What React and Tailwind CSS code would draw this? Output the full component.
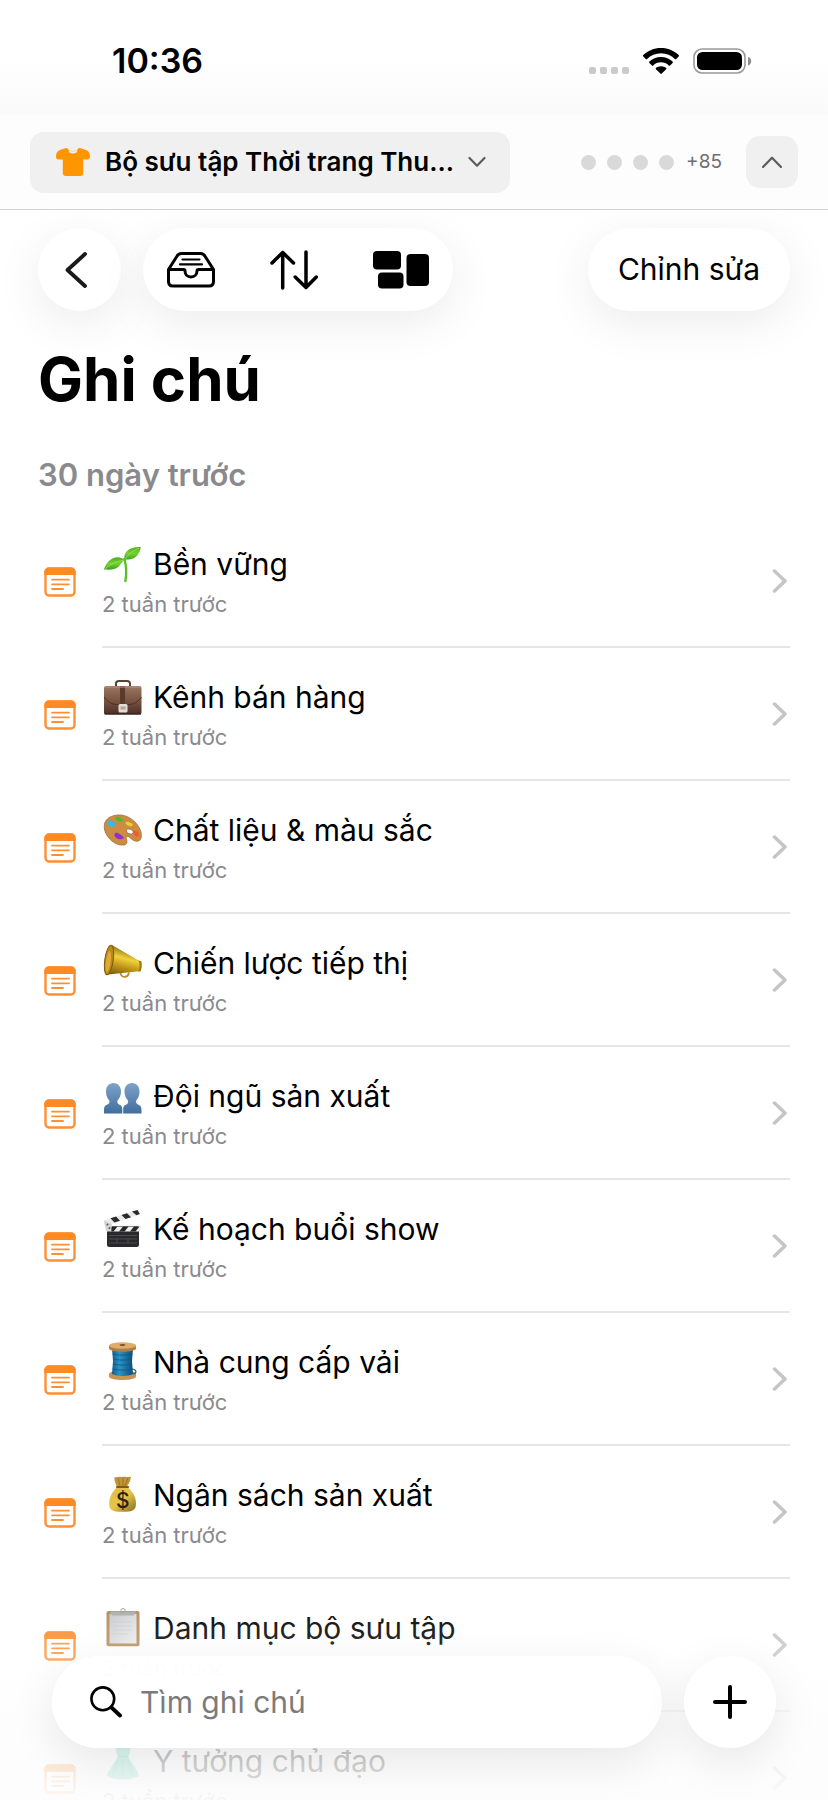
import { useState } from "react";

const notes = [
  { id: 1, icon: Seedling, title: "Bền vững", age: "2 tuần trước" },
  { id: 2, icon: Briefcase, title: "Kênh bán hàng", age: "2 tuần trước" },
  { id: 3, icon: Palette, title: "Chất liệu & màu sắc", age: "2 tuần trước" },
  { id: 4, icon: Megaphone, title: "Chiến lược tiếp thị", age: "2 tuần trước" },
  { id: 5, icon: People, title: "Đội ngũ sản xuất", age: "2 tuần trước" },
  { id: 6, icon: Clapper, title: "Kế hoạch buổi show", age: "2 tuần trước" },
  { id: 7, icon: Spool, title: "Nhà cung cấp vải", age: "2 tuần trước" },
  { id: 8, icon: MoneyBag, title: "Ngân sách sản xuất", age: "2 tuần trước" },
  { id: 9, icon: Clipboard, title: "Danh mục bộ sưu tập", age: "2 tuần trước" },
  { id: 10, icon: Dress, title: "Ý tưởng chủ đạo", age: "2 tuần trước" },
];

function Emoji({ children }) {
  return (
    <svg viewBox="0 0 40 40" className="h-10 w-10 shrink-0" aria-hidden="true">
      {children}
    </svg>
  );
}

function Seedling() {
  return (
    <Emoji>
      <defs>
        <linearGradient id="leaf" x1="0" y1="0" x2="0" y2="1">
          <stop offset="0" stopColor="#4fae1f" />
          <stop offset="0.5" stopColor="#74d233" />
          <stop offset="1" stopColor="#3f9d1b" />
        </linearGradient>
      </defs>
      <path d="M22.5 15c1.8 7 2.4 14 .9 22" fill="none" stroke="#5cbf24" strokeWidth="2.4" strokeLinecap="round" />
      <path d="M23 16c-2-5 1-9.500 6-11.500 3-1.200 7-1.500 9.800-1.500-1 6-4 10.500-8.500 11.800-2.500.8-5 .6-7.300 1.200z" fill="url(#leaf)" />
      <path d="M22.500 16c-3-3-8-3.600-12.500-1.200C5.500 17 4 21 1.800 25.500c6 .3 11.500.6 15-3 2-2.200 3-4.500 5.700-6.500z" fill="url(#leaf)" />
      <path d="M23 15.500C27 9 32 6.500 37 4M21.500 16.500C15 17 8 20 3 25" fill="none" stroke="#a0e65a" strokeWidth=".8" />
    </Emoji>
  );
}

function Briefcase() {
  return (
    <Emoji>
      <defs>
        <linearGradient id="case" x1="0" y1="0" x2="0" y2="1">
          <stop offset="0" stopColor="#9a775f" />
          <stop offset="0.5" stopColor="#7a5543" />
          <stop offset="1" stopColor="#4a2e25" />
        </linearGradient>
      </defs>
      <path d="M14 9V6.500C14 4.500 15 4 17 4h8c2 0 3 .5 3 2.500V9" fill="none" stroke="#5d4032" strokeWidth="2" />
      <rect x="2" y="9" width="37.500" height="28.500" rx="2" fill="url(#case)" />
      <path d="M2 20c5 7 10 8 18.700 8S34.500 27 39.500 20" fill="none" stroke="#4b3026" strokeWidth="1" />
      <path d="M18 9h5v20h-5z" fill="#5a3a2d" />
      <rect x="16.500" y="27" width="9" height="8.500" rx="1.500" fill="#e3ddd3" />
      <path d="M18.500 29.500h5v3h-5z" fill="#b0a393" />
      <path d="M3 10h35.500" stroke="#b8967c" strokeWidth="1" />
      <path d="M2.500 36.800h36.500" stroke="#38211a" strokeWidth="1.200" />
    </Emoji>
  );
}

function Palette() {
  return (
    <Emoji>
      <defs>
        <linearGradient id="wood" x1="0" y1="0" x2="1" y2="1">
          <stop offset="0" stopColor="#c98e48" />
          <stop offset="1" stopColor="#cf8a3b" />
        </linearGradient>
      </defs>
      <path
        d="M16 5c9-.7 19 6 22.500 15.500 1.200 3.500 1.500 8-1 10-3 2-7.500-.5-9.800-3-1.700-1.800-4.400-1-3.400 1.400 1 2.500 1.200 5.600-2.300 6.100-7 .8-14-4-17.500-10.500C.5 17.500.5 6.300 16 5z"
        fill="url(#wood)"
        stroke="#a46f2e"
        strokeWidth=".8"
      />
      <ellipse cx="27.800" cy="21.500" rx="3.600" ry="2.400" fill="#fff" stroke="#8e5c25" strokeWidth=".7" transform="rotate(20 27.800 21.500)" />
      <path d="M6 11c3-1.500 4 .5 6 1.300 3 1.200 2.500 4-.5 4.400C8 17 5 15.500 5.200 13z" fill="#3fb6e8" />
      <path d="M14 7c3-1 4 .8 6 1.700 2 1 1 3-1.200 3-3.500-.1-6.500-3-4.800-4.700z" fill="#46bd2c" />
      <path d="M24 12c2-1 4 .5 5.600 1.600 2.400 1.700.4 3.200-1.800 2.600-2.600-.7-5.300-2.900-3.800-4.200z" fill="#f2cf2c" />
      <path d="M32 20.500c2-.5 4.500 1.800 5 4 .3 2-1.700 2.700-3.500 1.400-2-1.500-3.500-4.900-1.500-5.400z" fill="#ef5a3d" />
      <path d="M12.500 24c1.500-2.500 4-1 6 .5 2.400 1.600 4.500 4 1.500 4.700-3.500.8-8.500-2-7.500-5.200z" fill="#9130cf" />
    </Emoji>
  );
}

function Megaphone() {
  return (
    <Emoji>
      <defs>
        <linearGradient id="horn" x1="0.300" y1="0" x2="0" y2="1">
          <stop offset="0" stopColor="#8a6a10" />
          <stop offset="0.350" stopColor="#f0d23c" />
          <stop offset="0.600" stopColor="#c39a1a" />
          <stop offset="1" stopColor="#6f5208" />
        </linearGradient>
      </defs>
      <path d="M18.500 29c-.5 6 7.500 6.600 8.500.5" fill="none" stroke="#b98f20" strokeWidth="1.800" />
      <path d="M10 2l27.500 16c2 2.500 1.600 7.500-.8 10.200L4 31.800z" fill="url(#horn)" />
      <path d="M36.500 17.600l2.800.6c.9 3.300.6 7-.6 10l-2.700.6c1.800-3.500 2-7.500.5-11.200z" fill="#a07c14" />
      <ellipse cx="7" cy="17" rx="4.200" ry="15" transform="rotate(8 7 17)" fill="#b98a14" stroke="#7c5c0c" strokeWidth="1" />
      <ellipse cx="6.300" cy="18.500" rx="2.400" ry="10.500" transform="rotate(8 6.300 18.500)" fill="#dfa93c" />
    </Emoji>
  );
}

function People() {
  const figure =
    "M11.500 7c4.500 0 7.500 3.500 7.500 8.500 0 4-1.500 7-3.500 9-.6 2 .3 3.500 2 4.200 2 .7 2.800 1.800 2.800 4.300v4.500H2V34c0-3 .8-4.500 3-5.300 2-.7 3-2.200 2.300-4.200-2-2-3.300-5-3.300-9C4 10.500 7 7 11.500 7z";
  return (
    <Emoji>
      <defs>
        <linearGradient id="silhouette" x1="0" y1="0" x2="0" y2="1">
          <stop offset="0" stopColor="#7fa3c8" />
          <stop offset="1" stopColor="#416e9c" />
        </linearGradient>
      </defs>
      <path d={figure} fill="url(#silhouette)" />
      <path d={figure} fill="url(#silhouette)" transform="translate(41.500 0) scale(-1 1)" />
    </Emoji>
  );
}

function Clapper() {
  return (
    <Emoji>
      <rect x="5" y="17" width="32" height="21" rx="2.500" fill="#29292b" />
      <path d="M5 17.500h34.500L38 22.500H5z" fill="#eee" />
      <path d="M10 17.500h5.500l-4 5H6zM21 17.500h5.500l-4 5H17zM32 17.500h5.500l-4 5H28z" fill="#252525" />
      <path d="M1.800 11.500L36.500.6l1.500 4.600L4 16.800z" fill="#e9e9e9" />
      <path d="M8.500 9.300l5.500-1.700 4 4.200-5.500 1.800zM19.500 5.900l5.500-1.700 4 4-5.500 1.900zM30 2.600L35.500.9l2.300 4-3.300 1.400z" fill="#2a2a2a" />
      <path d="M1.800 11.500l8 3.500-.5 7.500L4 22z" fill="#d4d4d4" />
      <circle cx="5.500" cy="15.500" r="1" fill="#555" />
      <circle cx="7.500" cy="19" r="1" fill="#555" />
      <path d="M7 26.500h28M7 30h28M7 34h28M15 30v4M26 30v4" stroke="#5c5c60" strokeWidth=".7" />
    </Emoji>
  );
}

function Spool() {
  return (
    <Emoji>
      <defs>
        <linearGradient id="thread" x1="0" y1="0" x2="1" y2="0">
          <stop offset="0" stopColor="#0e5f8e" />
          <stop offset="0.350" stopColor="#2a93c8" />
          <stop offset="1" stopColor="#0b4e78" />
        </linearGradient>
      </defs>
      <path d="M7 32c0-2 6-3.500 13.500-3.500S34 30 34 32v2.500c0 2-6 3.500-13.500 3.500S7 36.500 7 34.500z" fill="#cc9454" />
      <path d="M10 6h21l-1 13 1 13c-4 2.500-17 2.500-21 0l1-13z" fill="url(#thread)" />
      <path d="M10.500 12c6 1.500 14 1.500 20 0M11 17c6 1.500 13 1.500 19 0M11 22c6 1.500 13 1.500 19 0M10.500 27c6 1.500 14 1.500 20 0" fill="none" stroke="#0b5683" strokeWidth=".8" />
      <path d="M29 27c4 0 6 2 4.500 4-1.500 1.500-5 .5-8-.5" fill="none" stroke="#145f8c" strokeWidth="1.200" />
      <path d="M7 3.500v3c0 1.800 6 3.200 13.500 3.200S34 8.300 34 6.500v-3z" fill="#b57d41" />
      <ellipse cx="20.500" cy="3.500" rx="13.500" ry="3.200" fill="#deac6d" />
      <ellipse cx="20.500" cy="3" rx="3" ry=".9" fill="#7c5129" />
    </Emoji>
  );
}

function MoneyBag() {
  return (
    <Emoji>
      <defs>
        <linearGradient id="bag" x1="0" y1="0" x2="1" y2="1">
          <stop offset="0" stopColor="#dfbb45" />
          <stop offset="0.500" stopColor="#e7c548" />
          <stop offset="1" stopColor="#8b681a" />
        </linearGradient>
      </defs>
      <path d="M15.500 12C13 8.500 12 5 12.500 2c3 .8 4-1 7 .1 2.500-1 5 .7 9.500-.6-.5 4-2 7.500-4.500 10.500z" fill="#c19735" />
      <path d="M16 3l2 8M21 3v8M26 3l-3 8" stroke="#8f6b1e" strokeWidth=".8" />
      <path d="M15 12.500h11c4.500 4 8 9.500 8 16 0 6.500-3 8.300-13.500 8.300S7.200 35 7.200 28.500c0-6.500 3.300-12 7.800-16z" fill="url(#bag)" />
      <path d="M15 12h11" stroke="#855828" strokeWidth="2.200" strokeLinecap="round" />
      <text x="20.800" y="32.500" textAnchor="middle" fontFamily="Inter, sans-serif" fontSize="21" fontWeight="500" fill="#2b2213">
        $
      </text>
    </Emoji>
  );
}

function Clipboard() {
  return (
    <Emoji>
      <defs>
        <linearGradient id="sheet" x1="0" y1="0" x2="1" y2="1">
          <stop offset="0" stopColor="#c5c8cb" />
          <stop offset="1" stopColor="#ececec" />
        </linearGradient>
      </defs>
      <rect x="4.500" y="3" width="33" height="35.300" rx="2" fill="#b58b5a" />
      <path d="M7.500 6h27v29.500h-27z" fill="url(#sheet)" />
      <path d="M11 14h19M11 18h19M11 22h19M11 26h15" stroke="#bfc2c6" strokeWidth=".5" />
      <path d="M8 3.500h26l-2 4H10z" fill="#a9adb0" />
      <circle cx="21" cy="2.700" r="2.200" fill="none" stroke="#a0a0a0" strokeWidth="1" />
    </Emoji>
  );
}

function Dress() {
  return (
    <Emoji>
      <path d="M13 1c2 3 4 4 8 4s6-1 8-4l-1 10-2 5c4 6 8 12 11 18-3 3.500-9 4.500-16 4.500S8 37.500 4.500 34C8 28 12 22 16 16l-2-5z" fill="#4fd2b2" />
      <path d="M15.500 15.500h11M16 19l-6 17M21 19v19M26 19l5 17" stroke="#35b594" strokeWidth="1" fill="none" />
    </Emoji>
  );
}

function NoteIcon() {
  return (
    <svg viewBox="0 0 32 30" className="h-[30px] w-8 shrink-0" aria-hidden="true">
      <rect x="1.500" y="1.500" width="29" height="27" rx="3.500" fill="#fff" stroke="#ff8f33" strokeWidth="2.400" />
      <path d="M.3 8V5A4.500 4.500 0 0 1 4.800.5h22.400A4.500 4.500 0 0 1 31.700 5v3z" fill="#ff8a24" />
      <path d="M8 12.700h17M8 17.300h17M8 22h11" stroke="#ff8f33" strokeWidth="1.800" strokeLinecap="round" />
    </svg>
  );
}

function StatusBar() {
  return (
    <div className="flex h-[115px] shrink-0 items-center justify-between bg-linear-to-b from-white from-50% to-[#fafafa] pt-1.5 pr-[75px] pl-28">
      <span className="text-[34px] leading-10 font-semibold">10:36</span>
      <div className="flex items-center gap-3.5">
        <div className="flex gap-1 pt-5">
          {[0, 1, 2, 3].map((dot) => (
            <span key={dot} className="h-[7px] w-[7px] rounded-xs bg-[#cacaca]" />
          ))}
        </div>
        <svg viewBox="0 0 36 26" className="h-[26px] w-9" aria-label="Wi-Fi">
          <path d="M18 0c7 0 13.300 2.700 17.700 7.100.4.400.4.900 0 1.300l-2.500 2.500c-.4.400-.9.400-1.300 0C28.300 7.400 23.400 5.300 18 5.300S7.700 7.400 4.100 10.900c-.4.400-.9.400-1.300 0L.3 8.400c-.4-.4-.4-.9 0-1.300C4.700 2.700 11 0 18 0z" />
          <path d="M18 9c4.600 0 8.700 1.800 11.600 4.600.4.400.4.900 0 1.300l-2.500 2.500c-.4.400-.9.400-1.300 0-2-1.900-4.800-3.100-7.800-3.100s-5.800 1.200-7.800 3.100c-.4.400-.9.400-1.300 0l-2.500-2.500c-.4-.4-.4-.9 0-1.300C9.300 10.800 13.400 9 18 9z" />
          <path d="M18 18.300c2 0 3.900.7 5.200 1.800.4.400.4.800 0 1.200l-4.500 4.300c-.4.400-.9.400-1.300 0l-4.500-4.300c-.4-.4-.4-.8 0-1.200 1.300-1.100 3.100-1.800 5.100-1.800z" />
        </svg>
        <svg viewBox="0 0 60 26" className="h-[26px] w-[60px]" aria-label="Pin">
          <rect x="1" y="1" width="51" height="24" rx="8" fill="none" stroke="#999" strokeWidth="1.600" />
          <rect x="4" y="4" width="45" height="18" rx="5.500" />
          <path d="M55 9c2 .3 3.200 2 3.200 4.200S57 17.200 55 17.500z" fill="#8e8e8e" />
        </svg>
      </div>
    </div>
  );
}

function WorkspaceBar() {
  const [collapsed, setCollapsed] = useState(false);

  return (
    <header className="flex h-[95px] shrink-0 items-center justify-between border-b border-[#d2d2d2] bg-[#fdfdfd] px-[30px]">
      <button type="button" className="flex h-[61px] items-center rounded-[14px] bg-[#f0f0f0] pr-6 pl-[26px]">
        <svg viewBox="0 0 34 28" className="h-7 w-[34px]" aria-hidden="true">
          <path
            d="M11 0C9 .2 5 1.300 2.500 2.700 1 3.600 0 6 0 8.500c0 2 .8 3 2.500 3H6.800V25c0 2 1 3 3 3h14.400c2 0 3-1 3-3V11.500h4.300c1.700 0 2.500-1 2.500-3 0-2.500-1-4.900-2.500-5.800C29 1.300 25 .2 23 0c-.8 0-1.500 1.500-2.300 2.600-1 .6-6.400.6-7.400 0z"
            fill="#ff9500"
          />
          <path d="M12.500 2.500c0 4 9 4 9 0-2 1-7 1-9 0z" fill="#f0f0f0" />
        </svg>
        <span className="ml-[15px] text-[26px] leading-8 font-semibold">Bộ sưu tập Thời trang Thu...</span>
        <svg viewBox="0 0 18 12" className="ml-3.5 h-3 w-[18px]" aria-hidden="true">
          <path d="M1.500 2L9 9.700 16.500 2" fill="none" stroke="#5c5c5c" strokeWidth="2.200" strokeLinecap="round" strokeLinejoin="round" />
        </svg>
      </button>
      <div className="flex items-center">
        <div className="flex gap-[11px]">
          {[0, 1, 2, 3].map((dot) => (
            <span key={dot} className="h-[15px] w-[15px] rounded-full bg-[#d9d9d9]" />
          ))}
        </div>
        <span className="ml-3 text-[19px] leading-7 text-[#6e6e6e]">+85</span>
        <button
          type="button"
          aria-label="Thu gọn"
          aria-expanded={!collapsed}
          onClick={() => setCollapsed(!collapsed)}
          className="ml-6 flex h-[52px] w-[52px] items-center justify-center rounded-[14px] bg-[#f0f0f0]"
        >
          <svg viewBox="0 0 20 12" className="h-3 w-5" aria-hidden="true">
            <path d="M1 11l9-9.300L19 11" fill="none" stroke="#5c5c5c" strokeWidth="2.200" strokeLinecap="round" strokeLinejoin="round" />
          </svg>
        </button>
      </div>
    </header>
  );
}

function Toolbar() {
  return (
    <nav className="flex items-center pt-[18px]">
      <button
        type="button"
        aria-label="Quay lại"
        className="flex h-[83px] w-[83px] items-center justify-center rounded-full bg-white shadow-[0_12px_48px_rgba(0,0,0,0.08)]"
      >
        <svg viewBox="0 0 22 36" className="mr-2 h-9 w-[22px]" aria-hidden="true">
          <path d="M20 2L2.500 18 20 34" fill="none" stroke="#1a1a1c" strokeWidth="3.800" strokeLinecap="round" strokeLinejoin="round" />
        </svg>
      </button>
      <div className="ml-[22px] flex h-[83px] items-center gap-[55px] rounded-full bg-white px-6 shadow-[0_12px_48px_rgba(0,0,0,0.08)]">
        <button type="button" aria-label="Hộp thư">
          <svg viewBox="0 0 48 36" className="h-9 w-12" fill="none" stroke="#000" strokeLinecap="round" strokeLinejoin="round" aria-hidden="true">
            <path
              d="M1.500 17.500L9.800 4.500C10.900 2.500 12 1.500 14.500 1.500h19c2.500 0 3.600 1 4.700 3l8.300 13v12c0 3-1.500 4.500-4.500 4.500H6c-3 0-4.500-1.500-4.500-4.500z"
              strokeWidth="3"
            />
            <path d="M2 17.500h14.500c1 0 1.500.5 1.500 1.500 0 3.500 2.500 6 6 6s6-2.500 6-6c0-1 .5-1.500 1.500-1.500H46" strokeWidth="3" />
            <path d="M15.500 7.500h17M13 12.300h22" strokeWidth="2.200" />
          </svg>
        </button>
        <button type="button" aria-label="Sắp xếp">
          <svg viewBox="0 0 48 40" className="h-10 w-12" fill="none" stroke="#000" strokeWidth="3.500" strokeLinecap="round" strokeLinejoin="round" aria-hidden="true">
            <path d="M12.700 38V2.500M2 13L12.700 2.500 23.500 13" />
            <path d="M36 2v35.500M25.200 27L36 37.500 46.300 27" />
          </svg>
        </button>
        <button type="button" aria-label="Bố cục">
          <svg viewBox="0 0 56 38" className="h-[38px] w-14" aria-hidden="true">
            <rect x="0" y="0" width="28" height="18.500" rx="4" />
            <rect x="5" y="21.500" width="25.500" height="16" rx="4" />
            <rect x="33.500" y="3" width="22.500" height="32" rx="4" />
          </svg>
        </button>
      </div>
      <button type="button" className="ml-auto h-[83px] rounded-full bg-white px-[30px] text-[30px] shadow-[0_12px_48px_rgba(0,0,0,0.08)]">
        Chỉnh sửa
      </button>
    </nav>
  );
}

function NoteRow({ note }) {
  const Icon = note.icon;

  return (
    <li>
      <a href={`#note-${note.id}`} className="flex h-[133px] items-center">
        <span className="flex w-16 shrink-0 pl-1.5">
          <NoteIcon />
        </span>
        <span className="flex h-full min-w-0 flex-1 items-center justify-between border-b-2 border-[#e6e6e6]">
          <span className="flex flex-col pt-1.5">
            <span className="flex items-center gap-[11px]">
              <Icon />
              <span className="text-[30px] leading-10">{note.title}</span>
            </span>
            <span className="text-[22px] leading-10 text-[#8a8a8e]">{note.age}</span>
          </span>
          <svg viewBox="0 0 16 24" className="mr-0.5 h-6 w-4" aria-hidden="true">
            <path d="M2.500 2l10.500 10-10.500 10" fill="none" stroke="#c5c5c7" strokeWidth="3.500" strokeLinecap="round" strokeLinejoin="round" />
          </svg>
        </span>
      </a>
    </li>
  );
}

function SearchBar() {
  const [query, setQuery] = useState("");

  return (
    <div className="absolute inset-x-0 bottom-[52px] flex gap-[22px] px-[52px]">
      <label className="flex h-[92px] min-w-0 flex-1 items-center rounded-full bg-white/97 pl-[38px] shadow-[0_14px_48px_rgba(0,0,0,0.09)]">
        <span className="sr-only">Tìm ghi chú</span>
        <svg viewBox="0 0 32 32" className="h-8 w-8 shrink-0" fill="none" stroke="#000" strokeLinecap="round" aria-hidden="true">
          <circle cx="12.800" cy="12.800" r="11.400" strokeWidth="2.600" />
          <path d="M21.500 21.500l8.500 8" strokeWidth="3.800" />
        </svg>
        <input
          type="search"
          placeholder="Tìm ghi chú"
          value={query}
          onChange={(e) => setQuery(e.target.value)}
          className="ml-[18px] h-full min-w-0 flex-1 bg-transparent text-[30px] outline-none placeholder:text-[#7b7b7b]"
        />
      </label>
      <button
        type="button"
        aria-label="Thêm ghi chú"
        className="flex h-[92px] w-[92px] shrink-0 items-center justify-center rounded-full bg-white shadow-[0_14px_48px_rgba(0,0,0,0.09)]"
      >
        <svg viewBox="0 0 34 34" className="h-[34px] w-[34px]" aria-hidden="true">
          <path d="M17 2v30M2 17h30" stroke="#000" strokeWidth="4" strokeLinecap="round" />
        </svg>
      </button>
    </div>
  );
}

export default function App() {
  return (
    <div className="relative flex h-screen flex-col overflow-hidden bg-white font-['Inter',sans-serif] text-black">
      <StatusBar />
      <WorkspaceBar />
      <main className="min-h-0 flex-1 overflow-hidden px-[38px]">
        <Toolbar />
        <h1 className="mt-[30px] text-[60px] leading-[76px] font-bold">Ghi chú</h1>
        <h2 className="mt-[38px] text-[31px] leading-10 font-semibold text-[#8a8a8e]">30 ngày trước</h2>
        <ul className="mt-5">
          {notes.map((note) => (
            <NoteRow key={note.id} note={note} />
          ))}
        </ul>
      </main>
      {/* fades the list out beneath the floating search bar */}
      <div className="pointer-events-none absolute inset-x-0 bottom-0 h-52 bg-[linear-gradient(to_bottom,rgba(255,255,255,0)_0%,rgba(255,255,255,0.2)_28%,rgba(253,253,253,0.7)_58%,rgba(253,253,253,0.8)_80%,rgba(253,253,253,0.94)_100%)]" />
      <SearchBar />
    </div>
  );
}
